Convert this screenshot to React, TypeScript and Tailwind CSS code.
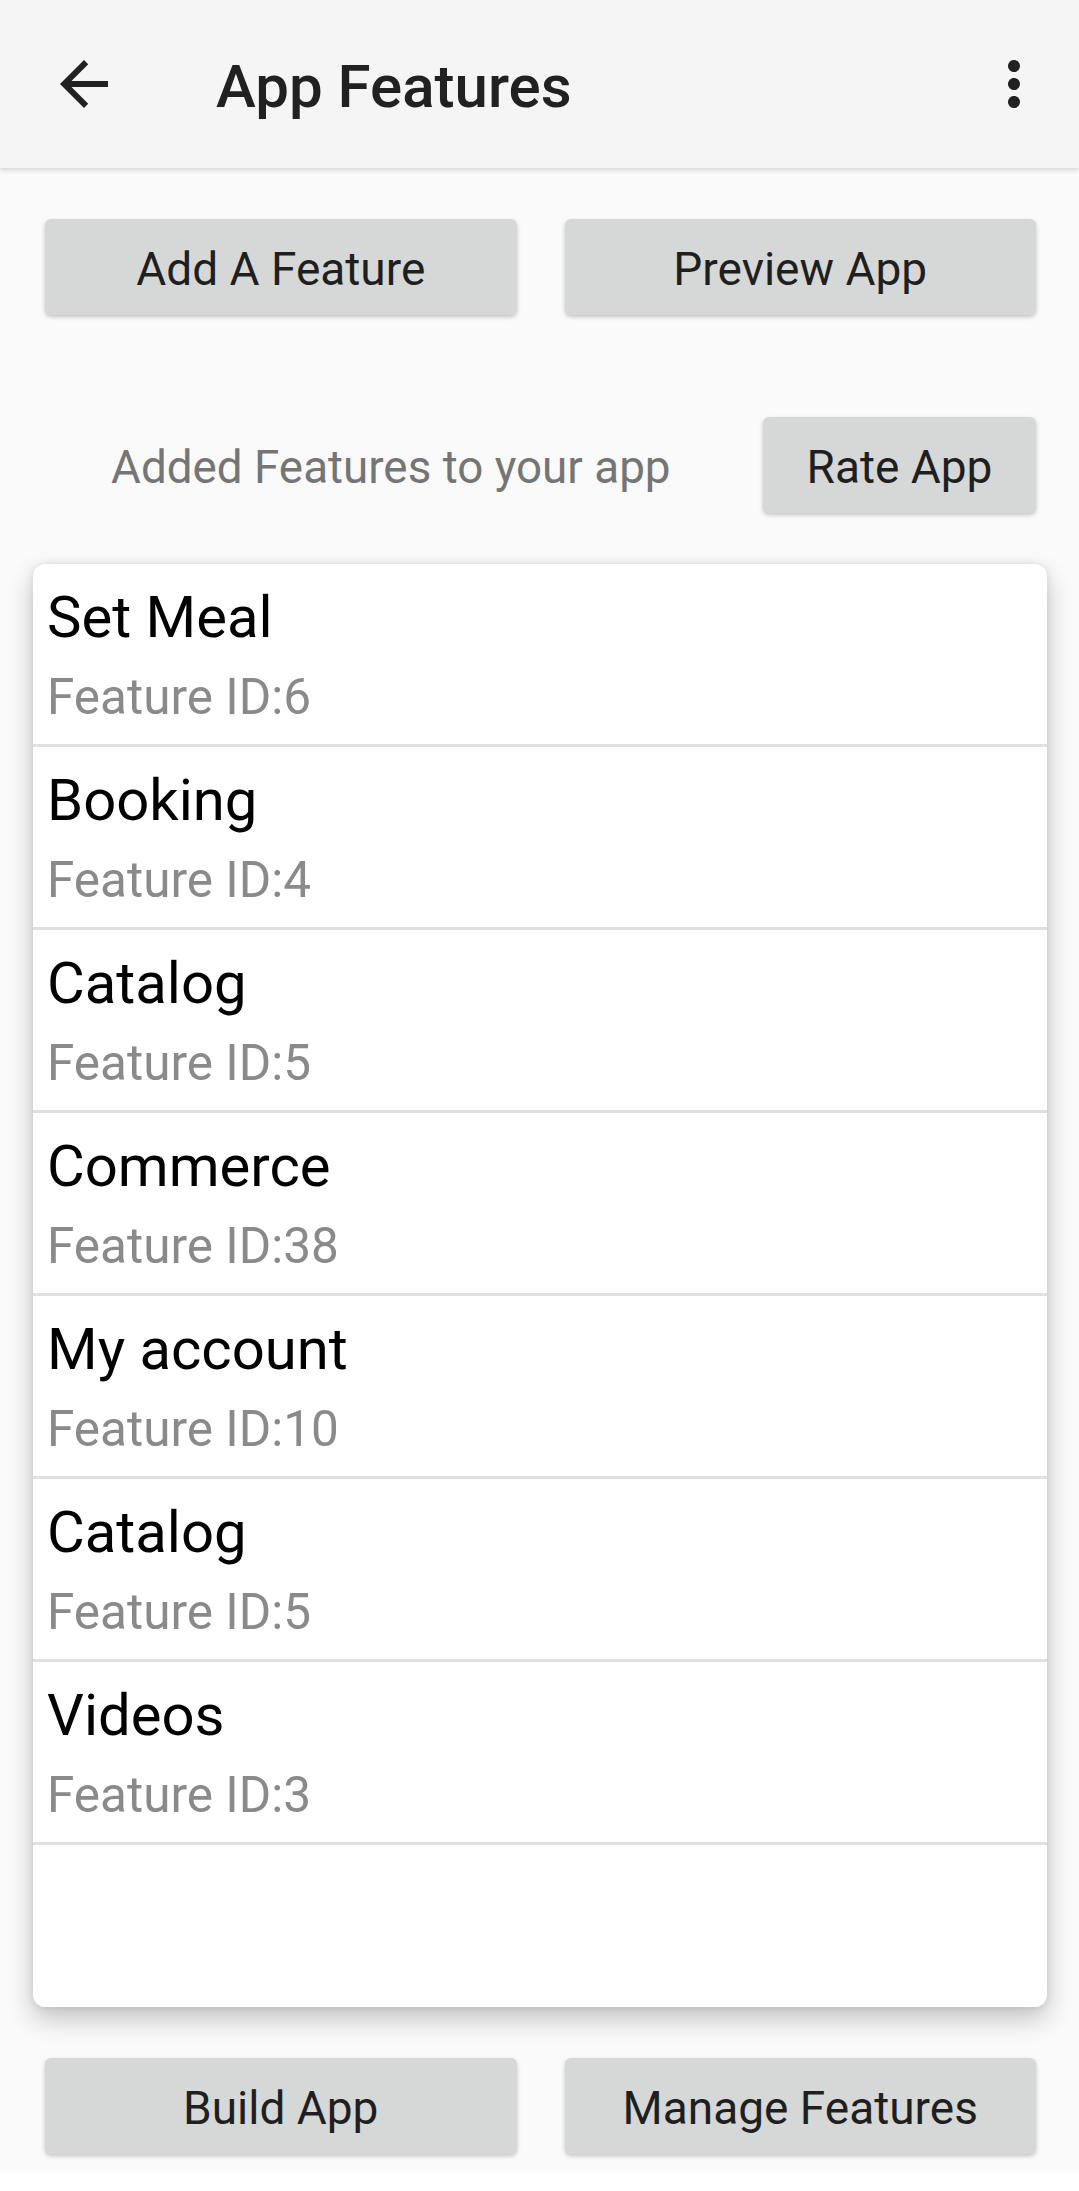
import React from "react";

const features = [
  { name: "Set Meal", id: 6 },
  { name: "Booking", id: 4 },
  { name: "Catalog", id: 5 },
  { name: "Commerce", id: 38 },
  { name: "My account", id: 10 },
  { name: "Catalog", id: 5 },
  { name: "Videos", id: 3 },
];

function Btn({ children, className = "" }: { children: React.ReactNode; className?: string }) {
  return (
    <button
      className={
        "h-[96px] rounded-[6px] bg-[#d6d7d7] text-[#1f1f1f] text-[46px] leading-none pt-[3px] shadow-[0_2px_4px_rgba(0,0,0,0.22)] flex items-center justify-center " +
        className
      }
    >
      {children}
    </button>
  );
}

export default function App() {
  return (
    <div
      className="w-[1079px] h-[2172px] bg-[#fafafa] flex flex-col"
      style={{ fontFamily: "Roboto, 'Noto Sans', sans-serif" }}
    >
      <header className="h-[168px] shrink-0 bg-[#f5f5f5] flex items-center shadow-[0_2px_5px_rgba(0,0,0,0.16)] relative z-10">
        <svg viewBox="0 0 24 24" className="w-[72px] h-[72px] ml-[48px]" fill="#212121">
          <path d="M20 11H7.83l5.59-5.59L12 4l-8 8 8 8 1.41-1.41L7.83 13H20v-2z" />
        </svg>
        <h1 className="ml-[96px] pt-[5px] text-[60px] leading-none font-medium text-[#212121] flex-1">
          App Features
        </h1>
        <svg viewBox="0 0 24 24" className="w-[72px] h-[72px] mr-[29px]" fill="#212121">
          <path d="M12 8c1.1 0 2-.9 2-2s-.9-2-2-2-2 .9-2 2 .9 2 2 2zm0 2c-1.1 0-2 .9-2 2s.9 2 2 2 2-.9 2-2-.9-2-2-2zm0 6c-1.1 0-2 .9-2 2s.9 2 2 2 2-.9 2-2-.9-2-2-2z" />
        </svg>
      </header>

      <div className="flex gap-[48px] pl-[45px] pr-[43px] mt-[51px]">
        <Btn className="flex-1">Add A Feature</Btn>
        <Btn className="flex-1">Preview App</Btn>
      </div>

      <div className="flex items-center justify-between pr-[43px] mt-[102px]">
        <span className="ml-[111px] pt-[5px] text-[45.8px] leading-none text-[#757575]">
          Added Features to your app
        </span>
        <Btn className="w-[273px]">Rate App</Btn>
      </div>

      <div className="mt-[51px] ml-[33px] mr-[32px] h-[1443px] bg-white rounded-[12px] overflow-hidden shadow-[0_12px_26px_rgba(0,0,0,0.22),0_0_8px_rgba(0,0,0,0.1)] flex flex-col">
        {features.map((f, i) => (
          <div key={i} className="h-[183px] shrink-0 border-b-[3px] border-[#e0e0e0] pl-[14px]">
            <div className="pt-[20px] text-[58px] leading-[66px] text-black">{f.name}</div>
            <div className="mt-[19px] text-[49.5px] leading-[56px] text-[#8a8a8a]">Feature ID:{f.id}</div>
          </div>
        ))}
      </div>

      <div className="flex gap-[48px] pl-[45px] pr-[43px] mt-[51px]">
        <Btn className="flex-1">Build App</Btn>
        <Btn className="flex-1">Manage Features</Btn>
      </div>
    </div>
  );
}
